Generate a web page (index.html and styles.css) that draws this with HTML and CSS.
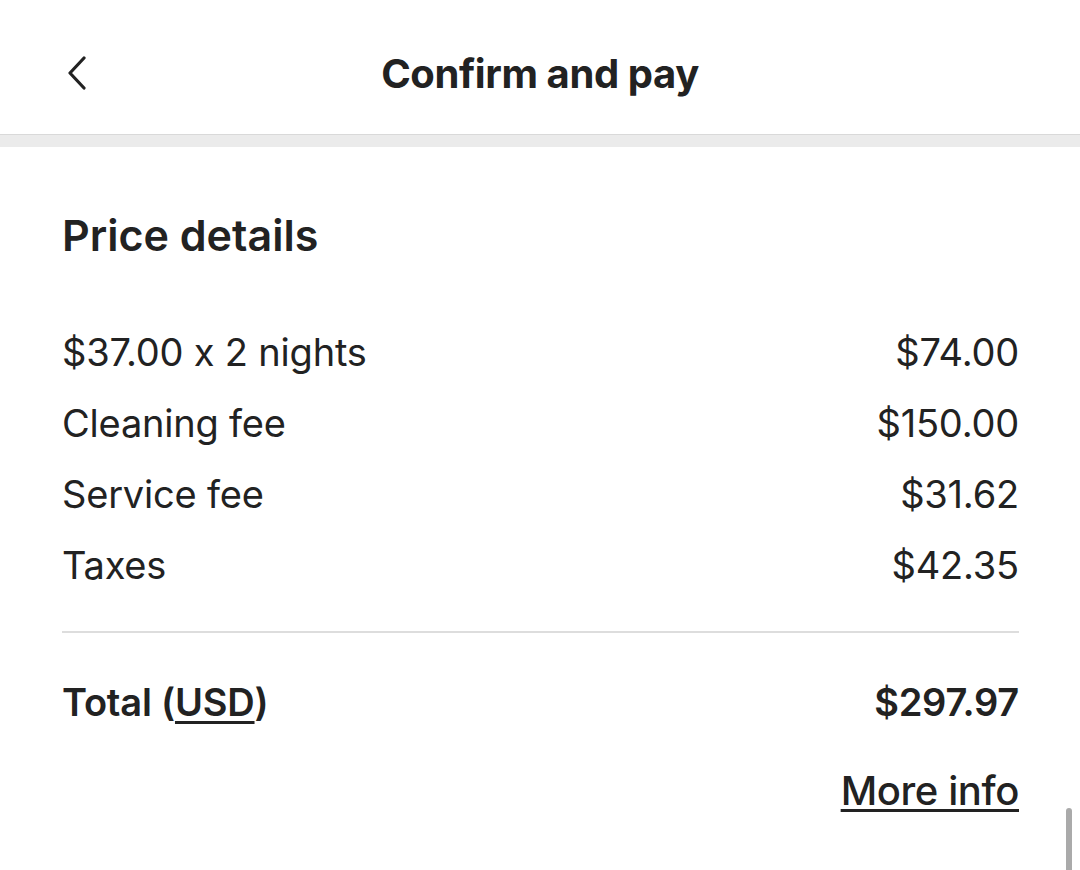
FILE: index.html
```html
<!DOCTYPE html>
<html>
<head>
<meta charset="utf-8">
<link rel="stylesheet" href="styles.css">
</head>
<body>
<header class="topbar">
  <button class="back" aria-label="Back">
    <svg width="22" height="34" viewBox="0 0 22 34"><path d="M18 2 L4 17 L18 32" fill="none" stroke="#222" stroke-width="3.2" stroke-linecap="round" stroke-linejoin="round"/></svg>
  </button>
  <h1 class="title">Confirm and pay</h1>
</header>
<div class="band"></div>
<main class="content">
  <h2 class="section-title">Price details</h2>
  <div class="rows">
    <div class="row"><span>$37.00 x 2 nights</span><span>$74.00</span></div>
    <div class="row"><span>Cleaning fee</span><span>$150.00</span></div>
    <div class="row"><span>Service fee</span><span>$31.62</span></div>
    <div class="row"><span>Taxes</span><span>$42.35</span></div>
  </div>
  <div class="divider"></div>
  <div class="row total"><span>Total (<u>USD</u>)</span><span>$297.97</span></div>
  <div class="more"><a href="#">More info</a></div>
</main>
<div class="scrollbar"></div>
</body>
</html>
```
FILE: styles.css
```css
html, body {
  margin: 0;
  padding: 0;
  background: #fff;
  color: #222;
  font-family: Inter, "Noto Sans", sans-serif;
  overflow: hidden;
}
.topbar {
  height: 134px;
  display: flex;
  align-items: center;
  justify-content: center;
  position: relative;
}
.back {
  position: absolute;
  left: 66px;
  top: 56px;
  background: none;
  border: 0;
  padding: 0;
  width: 22px;
  height: 34px;
}
.back svg { display: block; }
.title {
  margin: 0;
  font-size: 40px;
  font-weight: 700;
  letter-spacing: -0.4px;
  padding-top: 12px;
}
.band {
  height: 12px;
  background: #ebebeb;
  border-top: 1px solid #d9d9d9;
}
.content {
  padding: 0 61px 0 62px;
}
.section-title {
  margin: 0;
  padding-top: 64px;
  font-size: 43px;
  font-weight: 600;
  line-height: 48px;
  letter-spacing: 0;
}
.rows {
  padding-top: 58px;
}
.row {
  display: flex;
  justify-content: space-between;
  align-items: baseline;
  font-size: 38px;
  line-height: 71px;
  letter-spacing: -0.2px;
  font-weight: 400;
}
.divider {
  height: 2px;
  background: #dddddd;
  margin-top: 30px;
}
.total {
  font-weight: 600;
  padding-top: 34px;
}
.total u {
  text-decoration-thickness: 3px;
  text-underline-offset: 5px;
}
.more {
  text-align: right;
  padding-top: 17px;
  font-size: 40px;
  line-height: 71px;
  font-weight: 500;
  letter-spacing: -0.4px;
}
.more a {
  color: #222;
  text-decoration: underline;
  text-decoration-thickness: 3px;
  text-underline-offset: 4px;
}
.scrollbar {
  position: absolute;
  left: 1066px;
  top: 808px;
  width: 6px;
  height: 70px;
  border-radius: 3px;
  background: #aaaaaa;
}
```
